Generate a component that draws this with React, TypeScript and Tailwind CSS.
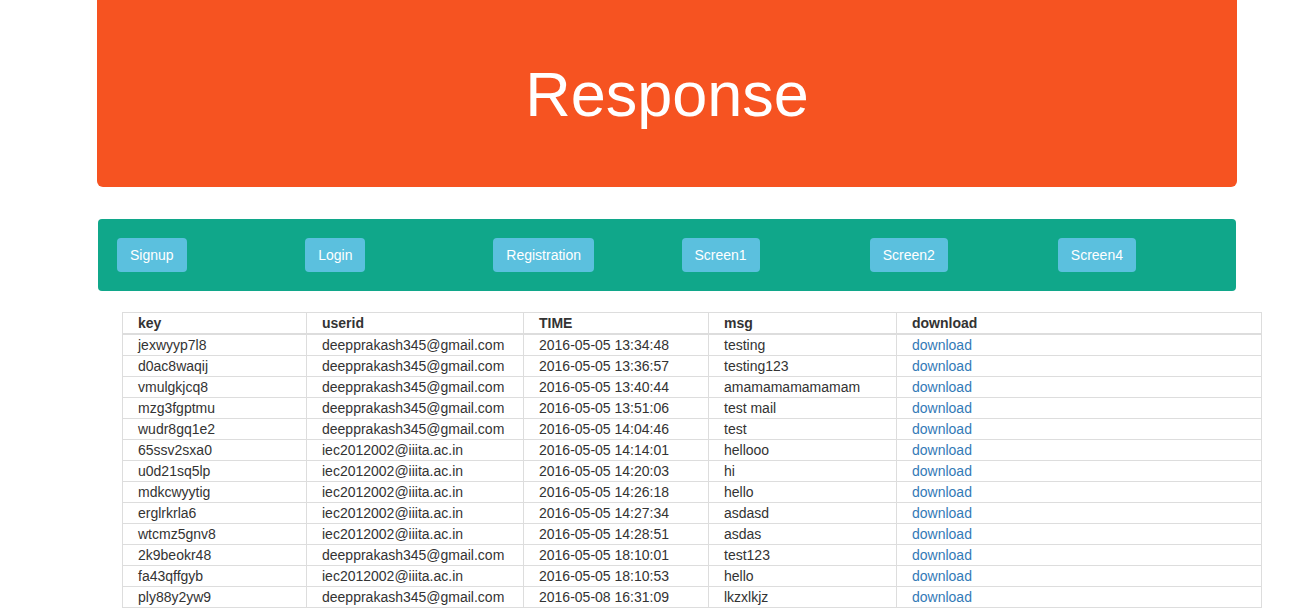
const navItems = ['Signup', 'Login', 'Registration', 'Screen1', 'Screen2', 'Screen4'];

const rows: [string, string, string, string][] = [
  ['jexwyyp7l8', 'deepprakash345@gmail.com', '2016-05-05 13:34:48', 'testing'],
  ['d0ac8waqij', 'deepprakash345@gmail.com', '2016-05-05 13:36:57', 'testing123'],
  ['vmulgkjcq8', 'deepprakash345@gmail.com', '2016-05-05 13:40:44', 'amamamamamamam'],
  ['mzg3fgptmu', 'deepprakash345@gmail.com', '2016-05-05 13:51:06', 'test mail'],
  ['wudr8gq1e2', 'deepprakash345@gmail.com', '2016-05-05 14:04:46', 'test'],
  ['65ssv2sxa0', 'iec2012002@iiita.ac.in', '2016-05-05 14:14:01', 'hellooo'],
  ['u0d21sq5lp', 'iec2012002@iiita.ac.in', '2016-05-05 14:20:03', 'hi'],
  ['mdkcwyytig', 'iec2012002@iiita.ac.in', '2016-05-05 14:26:18', 'hello'],
  ['erglrkrla6', 'iec2012002@iiita.ac.in', '2016-05-05 14:27:34', 'asdasd'],
  ['wtcmz5gnv8', 'iec2012002@iiita.ac.in', '2016-05-05 14:28:51', 'asdas'],
  ['2k9beokr48', 'deepprakash345@gmail.com', '2016-05-05 18:10:01', 'test123'],
  ['fa43qffgyb', 'iec2012002@iiita.ac.in', '2016-05-05 18:10:53', 'hello'],
  ['ply88y2yw9', 'deepprakash345@gmail.com', '2016-05-08 16:31:09', 'lkzxlkjz'],
];

const cell = 'border border-[#dddddd] pl-[15px] pr-2 h-[21px] leading-[20px] text-left align-middle';

export default function App() {
  return (
    <div className="min-h-screen bg-white text-[#333333] text-[14px]" style={{ fontFamily: '"Liberation Sans", Arial, sans-serif' }}>
      {/* Header banner */}
      <div className="ml-[97px] w-[1140px] h-[187px] bg-[#f65321] rounded-b-[6px] flex items-center justify-center">
        <h1 className="text-white text-[63px] leading-none font-normal pt-[2px]">Response</h1>
      </div>

      {/* Nav bar */}
      <div className="ml-[98px] mt-[32px] w-[1138px] h-[72px] bg-[#10a78a] rounded-[4px] pl-[19px] flex items-center">
        <div className="grid grid-cols-6 w-[1129px] shrink-0">
          {navItems.map((item) => (
            <div key={item}>
              <button className="bg-[#5bc0de] text-white rounded-[4px] h-[34px] px-[13px] text-[14px]">{item}</button>
            </div>
          ))}
        </div>
      </div>

      {/* Table */}
      <table className="ml-[122px] mt-[21px] w-[1140px] border-collapse table-fixed">
        <colgroup>
          <col className="w-[184px]" />
          <col className="w-[217px]" />
          <col className="w-[185px]" />
          <col className="w-[188px]" />
          <col />
        </colgroup>
        <thead>
          <tr>
            {['key', 'userid', 'TIME', 'msg', 'download'].map((h) => (
              <th key={h} className={`${cell} font-bold border-b-2`}>{h}</th>
            ))}
          </tr>
        </thead>
        <tbody>
          {rows.map(([k, u, t, m]) => (
            <tr key={k}>
              <td className={cell}>{k}</td>
              <td className={cell}>{u}</td>
              <td className={cell}>{t}</td>
              <td className={cell}>{m}</td>
              <td className={cell}>
                <a href="#" className="text-[#337ab7]">download</a>
              </td>
            </tr>
          ))}
        </tbody>
      </table>
    </div>
  );
}
